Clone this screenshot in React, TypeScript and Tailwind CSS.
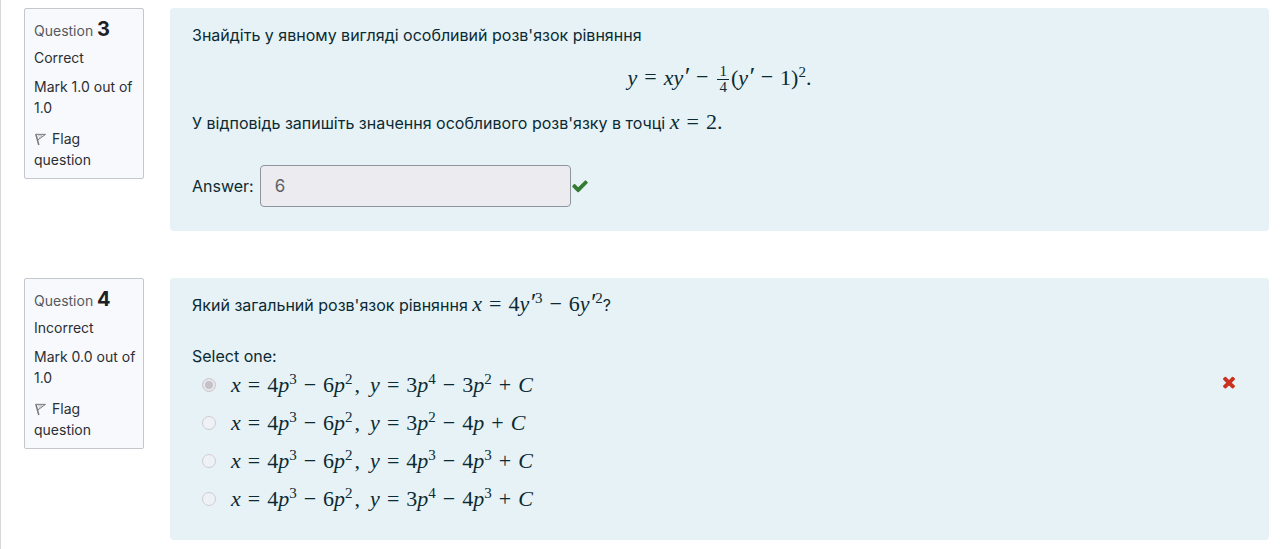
import type { ReactNode } from "react";

const V = ({ children }: { children: ReactNode }) => <i className="italic">{children}</i>;
const Op = ({ children }: { children: ReactNode }) => <span className="mx-[7px]">{children}</span>;
const Sup = ({ children }: { children: ReactNode }) => (
  <span className="align-[8px] text-[15px] leading-0">{children}</span>
);
const Prime = () => <span className="text-[26px] leading-0 italic">′</span>;

function Formula({ children }: { children: ReactNode }) {
  return (
    <span className="whitespace-nowrap font-['Liberation_Serif',serif] text-[22px] leading-6">
      {children}
    </span>
  );
}

function CheckIcon() {
  return (
    <svg viewBox="0 0 1792 1792" className="size-[18px] shrink-0 fill-[#357a32]" role="img" aria-label="Correct">
      <path d="M1671 566q0 40-28 68l-724 724-136 136q-28 28-68 28t-68-28l-136-136-362-362q-28-28-28-68t28-68l136-136q28-28 68-28t68 28l294 295 656-657q28-28 68-28t68 28l136 136q28 28 28 68z" />
    </svg>
  );
}

function CrossIcon() {
  return (
    <svg viewBox="0 0 1792 1792" className="mt-[7px] size-[18px] shrink-0 self-start fill-[#ca3120]" role="img" aria-label="Incorrect">
      <path d="M1490 1322q0 40-28 68l-136 136q-28 28-68 28t-68-28l-294-294-294 294q-28 28-68 28t-68-28l-136-136q-28-28-28-68t28-68l294-294-294-294q-28-28-28-68t28-68l136-136q28-28 68-28t68 28l294 294 294-294q28-28 68-28t68 28l136 136q28 28 28 68t-28 68l-294 294 294 294q28 28 28 68z" />
    </svg>
  );
}

function FlagIcon() {
  return (
    <svg viewBox="0 0 14 14" className="mr-1 inline-block size-[14px] align-[-2px]" fill="none" aria-hidden="true">
      <path d="M1.8 2 4.8 13" stroke="#777" strokeWidth="1.5" />
      <path d="M2.3 2.3 11.5 2.4 4 7.8" stroke="#777" strokeWidth="1" strokeLinejoin="round" />
      <path d="M4 3.8 8.2 3.7 4.7 6.2" stroke="#aaa" strokeWidth="0.7" />
    </svg>
  );
}

function Info({ number, state, mark }: { number: number; state: string; mark: string }) {
  return (
    <aside className="w-[120px] shrink-0 self-start rounded-xs border border-[#c4c8cc] bg-[#f8f9fc] pt-[10px] pr-1 pb-2 pl-[9px] text-[14px] leading-[21px] text-[#2b2f33]">
      <h3 className="text-[#555a5f]">
        Question <span className="text-[20px] font-bold text-[#1d2125]">{number}</span>
      </h3>
      <div className="mt-[6px]">{state}</div>
      <div className="mt-2">{mark}</div>
      <a href="#flag" className="mt-[10px] block pr-3">
        <FlagIcon />
        Flag question
      </a>
    </aside>
  );
}

function Choice({ children, checked, feedback }: { children: ReactNode; checked?: boolean; feedback?: ReactNode }) {
  return (
    <div className="flex h-[38px] items-center justify-between pr-[9px] pl-[10px]">
      <label className="flex items-center gap-[15px]">
        <input
          type="radio"
          name="solution"
          disabled
          defaultChecked={checked}
          className="size-[14px] shrink-0 appearance-none rounded-full border border-[#d2ccd2] bg-[#eef1f5] checked:bg-[#c5c1c8] checked:shadow-[inset_0_0_0_2px_#e9eaef]"
        />
        <Formula>{children}</Formula>
      </label>
      {feedback}
    </div>
  );
}

const FirstPart = () => (
  <>
    <V>x</V><Op>=</Op>4<V>p</V><Sup>3</Sup><Op>−</Op>6<V>p</V><Sup>2</Sup>
    <span className="mr-[10px] ml-[2px]">,</span><V>y</V><Op>=</Op>
  </>
);

export default function App() {
  return (
    <main className="flex min-h-screen flex-col gap-[47px] border-l border-[#d5d7da] bg-white pt-2 pr-[11px] pb-[9px] pl-[23px] font-['Inter','Liberation_Sans',sans-serif] text-[16px] leading-6 text-[#0b2a33]">
      <section className="flex gap-[26px]">
        <Info number={3} state="Correct" mark="Mark 1.0 out of 1.0" />
        <div className="min-w-0 flex-1 rounded-sm bg-[#e6f2f5] px-[22px] pt-[15px] pb-6">
          <p>Знайдіть у явному вигляді особливий розв'язок рівняння</p>
          <div className="mt-4 flex h-8 items-center justify-center">
            <Formula>
              <V>y</V><Op>=</Op><V>xy</V><Prime /><Op>−</Op>
              <span className="mx-[2px] inline-flex flex-col items-center align-middle text-[15px] leading-[15px]">
                <span className="border-b border-[#0b2a33] px-[2px]">1</span>
                <span>4</span>
              </span>
              (<V>y</V><Prime /><Op>−</Op>1)<Sup>2</Sup>.
            </Formula>
          </div>
          <p className="mt-[15px]">
            У відповідь запишіть значення особливого розв'язку в точці{" "}
            <Formula><V>x</V><Op>=</Op>2.</Formula>
          </p>
          <div className="mt-[30px] flex items-center">
            <label htmlFor="answer">Answer:</label>
            <input
              id="answer"
              readOnly
              defaultValue="6"
              className="ml-[6px] h-[42px] w-[311px] rounded-sm border border-[#8f959e] bg-[#ebebf0] px-[14px] text-[17px] text-[#5c6168]"
            />
            <CheckIcon />
          </div>
        </div>
      </section>

      <section className="flex gap-[26px]">
        <Info number={4} state="Incorrect" mark="Mark 0.0 out of 1.0" />
        <div className="min-w-0 flex-1 rounded-sm bg-[#e6f2f5] px-[22px] pt-[14px] pb-[22px]">
          <p>
            Який загальний розв'язок рівняння{" "}
            <Formula>
              <V>x</V><Op>=</Op>4<V>y</V><Prime /><Sup>3</Sup><Op>−</Op>6<V>y</V><Prime /><Sup>2</Sup>
            </Formula>
            ?
          </p>
          <fieldset className="mt-[27px]">
            <legend>Select one:</legend>
            <div className="-mt-[2px]">
              <Choice checked feedback={<CrossIcon />}>
                <FirstPart />3<V>p</V><Sup>4</Sup><Op>−</Op>3<V>p</V><Sup>2</Sup><Op>+</Op><V>C</V>
              </Choice>
              <Choice>
                <FirstPart />3<V>p</V><Sup>2</Sup><Op>−</Op>4<V>p</V><Op>+</Op><V>C</V>
              </Choice>
              <Choice>
                <FirstPart />4<V>p</V><Sup>3</Sup><Op>−</Op>4<V>p</V><Sup>3</Sup><Op>+</Op><V>C</V>
              </Choice>
              <Choice>
                <FirstPart />3<V>p</V><Sup>4</Sup><Op>−</Op>4<V>p</V><Sup>3</Sup><Op>+</Op><V>C</V>
              </Choice>
            </div>
          </fieldset>
        </div>
      </section>
    </main>
  );
}
